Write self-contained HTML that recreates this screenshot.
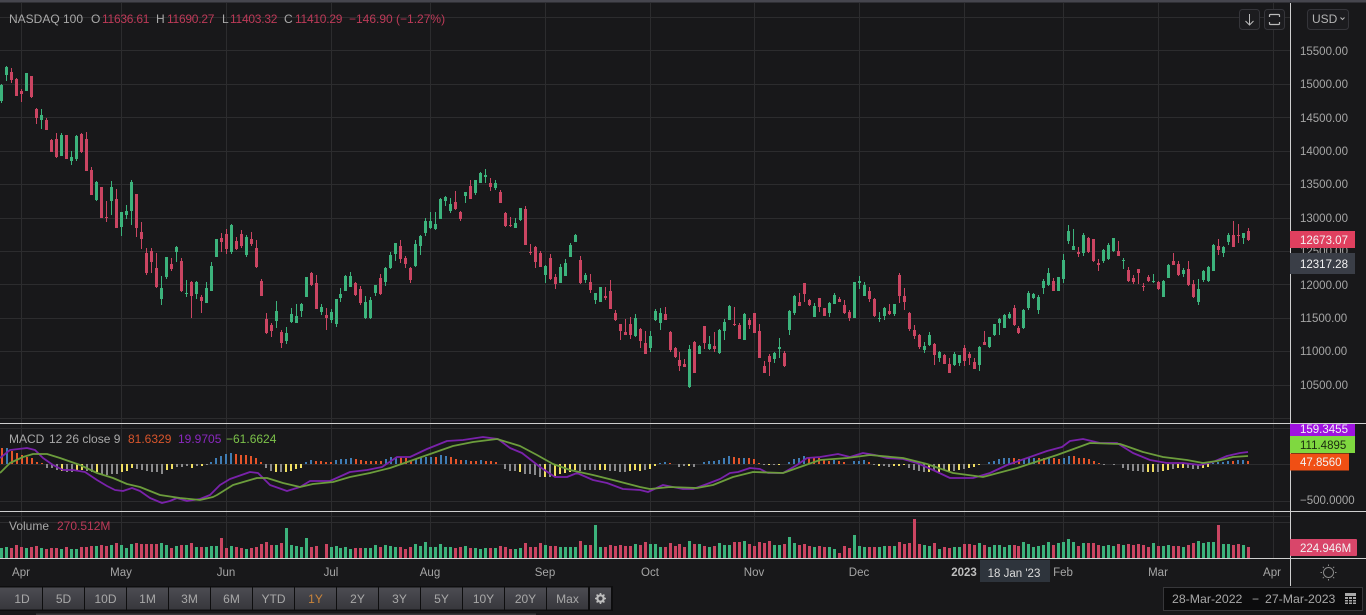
<!DOCTYPE html>
<html lang="en">
<head>
<meta charset="utf-8">
<title>NASDAQ 100</title>
<style>
html,body{margin:0;padding:0;background:#18181a;width:1366px;height:615px;overflow:hidden}
svg{display:block;position:absolute;left:0;top:0}
text{font-family:"Liberation Sans",sans-serif;font-size:12px;fill:#a9a9a9}
.r{fill:#bd3a58}
.v{fill:#bd3a58;letter-spacing:-.25px}
.ax{font-size:11.5px;fill:#a6a6a6}
.tg{font-size:12px;fill:#f2f2f2}
.bt{font-size:12px;fill:#a8a8a8;text-anchor:middle}
.m{text-anchor:middle}
</style>
</head>
<body>
<svg width="1366" height="615" viewBox="0 0 1366 615" xmlns="http://www.w3.org/2000/svg">
<defs>
<linearGradient id="b" x1="0" y1="0" x2="0" y2="1"><stop offset="0" stop-color="#4c4c52"/><stop offset="1" stop-color="#37373c"/></linearGradient>
</defs>
<rect width="1366" height="615" fill="#18181a"/>
<rect width="1366" height="2.5" fill="#46464e"/>

<!-- grid -->
<path fill="none" stroke="#2c2c2e" d="M0 17.5H1290M0 50.5H1290M0 84.5H1290M0 117.5H1290M0 151.5H1290M0 184.5H1290M0 218.5H1290M0 251.5H1290M0 284.5H1290M0 318.5H1290M0 351.5H1290M0 385.5H1290M0 418.5H1290M0 428.5H1290M0 464.5H1290M0 501.5H1290M0 516.5H1290M0 522.5H1290M21.5 3V558M121.5 3V558M226.5 3V558M331.5 3V558M430.5 3V558M545.5 3V558M650.5 3V558M754.5 3V558M859.5 3V558M964.5 3V558M1063.5 3V558M1158.5 3V558M1273.5 3V558"/>

<!-- volume -->
<path fill="none" stroke="#3cb37c" stroke-width="3" d="M1.5 548V558M6.5 547V558M26.5 548V558M41.5 548V558M61.5 549V558M71.5 549V558M76.5 549V558M96.5 546V558M111.5 545V558M121.5 545V558M126.5 548V558M131.5 544V558M161.5 543V558M166.5 545V558M176.5 546V558M186.5 545V558M196.5 547V558M206.5 547V558M211.5 546V558M216.5 546V558M231.5 546V558M246.5 549V558M276.5 545V558M286.5 528V558M291.5 545V558M296.5 546V558M301.5 547V558M306.5 538V558M331.5 547V558M336.5 546V558M340.5 548V558M345.5 547V558M350.5 549V558M365.5 548V558M370.5 548V558M375.5 545V558M385.5 545V558M390.5 546V558M395.5 547V558M415.5 544V558M420.5 546V558M425.5 542V558M430.5 547V558M435.5 547V558M440.5 544V558M445.5 547V558M450.5 547V558M465.5 546V558M475.5 548V558M480.5 549V558M485.5 548V558M495.5 548V558M515.5 549V558M520.5 548V558M545.5 545V558M560.5 547V558M565.5 547V558M570.5 547V558M575.5 547V558M585.5 545V558M595.5 525V558M600.5 547V558M635.5 544V558M650.5 544V558M655.5 544V558M660.5 547V558M689.5 541V558M699.5 544V558M709.5 547V558M719.5 543V558M724.5 545V558M729.5 545V558M744.5 541V558M774.5 545V558M779.5 545V558M789.5 537V558M794.5 543V558M814.5 547V558M829.5 547V558M834.5 549V558M854.5 535V558M859.5 546V558M864.5 547V558M879.5 547V558M884.5 546V558M894.5 546V558M924.5 545V558M929.5 546V558M939.5 549V558M954.5 547V558M959.5 547V558M979.5 543V558M989.5 547V558M994.5 545V558M999.5 545V558M1004.5 547V558M1009.5 545V558M1023.5 542V558M1028.5 544V558M1033.5 547V558M1038.5 546V558M1043.5 545V558M1048.5 542V558M1058.5 543V558M1063.5 542V558M1068.5 539V558M1073.5 542V558M1083.5 543V558M1103.5 546V558M1108.5 545V558M1113.5 546V558M1123.5 545V558M1153.5 543V558M1163.5 546V558M1168.5 545V558M1183.5 547V558M1198.5 541V558M1203.5 543V558M1208.5 542V558M1213.5 542V558M1223.5 544V558M1228.5 544V558M1243.5 545V558"/>
<path fill="none" stroke="#cb4562" stroke-width="3" d="M11.5 548V558M16.5 545V558M21.5 547V558M31.5 547V558M36.5 546V558M46.5 549V558M51.5 548V558M56.5 548V558M66.5 547V558M81.5 547V558M86.5 547V558M91.5 546V558M101.5 545V558M106.5 546V558M116.5 543V558M136.5 543V558M141.5 544V558M146.5 544V558M151.5 544V558M156.5 544V558M171.5 548V558M181.5 545V558M191.5 543V558M201.5 547V558M221.5 538V558M226.5 548V558M236.5 547V558M241.5 548V558M251.5 548V558M256.5 547V558M261.5 544V558M266.5 542V558M271.5 545V558M281.5 543V558M311.5 547V558M316.5 546V558M326.5 544V558M355.5 548V558M360.5 548V558M380.5 547V558M400.5 547V558M405.5 549V558M410.5 547V558M455.5 548V558M460.5 547V558M470.5 548V558M490.5 548V558M500.5 546V558M505.5 547V558M510.5 549V558M525.5 543V558M530.5 547V558M535.5 547V558M540.5 543V558M550.5 546V558M555.5 546V558M580.5 541V558M590.5 545V558M605.5 547V558M610.5 545V558M615.5 546V558M620.5 545V558M625.5 546V558M630.5 546V558M640.5 545V558M645.5 542V558M665.5 547V558M670.5 543V558M675.5 546V558M679.5 544V558M684.5 547V558M694.5 544V558M704.5 546V558M714.5 546V558M734.5 542V558M739.5 542V558M749.5 544V558M754.5 546V558M759.5 542V558M764.5 543V558M769.5 541V558M784.5 544V558M799.5 545V558M804.5 544V558M809.5 546V558M819.5 546V558M824.5 547V558M839.5 553V558M844.5 546V558M849.5 548V558M869.5 547V558M874.5 547V558M889.5 546V558M899.5 542V558M904.5 544V558M909.5 543V558M914.5 519V558M919.5 544V558M934.5 543V558M944.5 547V558M949.5 548V558M964.5 544V558M969.5 544V558M974.5 545V558M984.5 545V558M1014.5 545V558M1018.5 546V558M1053.5 545V558M1078.5 546V558M1088.5 543V558M1093.5 543V558M1098.5 545V558M1118.5 544V558M1128.5 544V558M1133.5 545V558M1138.5 544V558M1143.5 545V558M1148.5 547V558M1158.5 546V558M1173.5 546V558M1178.5 546V558M1188.5 545V558M1193.5 543V558M1218.5 525V558M1233.5 545V558M1238.5 544V558M1248.5 547V558"/>

<!-- macd histogram -->
<path fill="none" stroke="#3f7db5" stroke-width="2" d="M7 448V464M211 462V464M216 458V464M221 456V464M226 454V464M231 453V464M306 462V464M311 460V464M336 460V464M341 459V464M346 459V464M351 458V464M386 459V464M391 457V464M396 457V464M416 459V464M421 458V464M426 457V464M431 457V464M441 455V464M446 456V464M466 460V464M481 460V464M660 463V464M665 462V464M704 462V464M709 461V464M714 461V464M719 460V464M724 458V464M729 456V464M744 458V464M789 462V464M794 459V464M799 458V464M804 456V464M834 460V464M854 461V464M859 461V464M864 460V464M989 462V464M994 461V464M999 459V464M1004 458V464M1009 458V464M1024 459V464M1029 458V464M1034 458V464M1049 458V464M1064 458V464M1069 456V464M1213 463V464M1218 462V464M1223 462V464M1228 461V464M1238 460V464M1243 460V464"/>
<path fill="none" stroke="#e5552a" stroke-width="2" d="M2 448V464M12 451V464M17 453V464M22 455V464M27 457V464M32 458V464M37 462V464M42 463V464M236 454V464M241 455V464M246 455V464M251 456V464M256 458V464M261 462V464M316 461V464M321 461V464M326 462V464M331 462V464M356 459V464M361 460V464M366 461V464M371 461V464M376 461V464M381 461V464M401 457V464M406 458V464M411 460V464M436 457V464M451 457V464M456 459V464M461 460V464M471 461V464M476 461V464M486 461V464M491 461V464M496 462V464M670 463V464M734 457V464M739 458V464M749 458V464M754 459V464M759 463V464M809 457V464M814 458V464M819 458V464M824 459V464M829 461V464M839 461V464M844 462V464M869 462V464M1014 458V464M1019 459V464M1039 458V464M1044 458V464M1054 458V464M1059 459V464M1074 456V464M1079 458V464M1084 458V464M1089 459V464M1094 461V464M1099 463V464M1233 461V464M1248 461V464"/>
<path fill="none" stroke="#8a8a8c" stroke-width="2" d="M47 464V468M52 464V468M57 464V470M67 464V472M72 464V472M87 464V471M92 464V472M102 464V474M107 464V475M112 464V474M117 464V474M137 464V469M142 464V470M147 464V471M152 464V472M157 464V472M162 464V474M177 464V467M182 464V467M187 464V466M197 464V466M207 464V465M266 464V468M271 464V471M281 464V472M505 464V469M510 464V471M515 464V471M525 464V474M530 464V474M535 464V475M540 464V477M550 464V477M580 464V471M585 464V470M590 464V470M595 464V470M610 464V471M615 464V471M620 464V472M625 464V472M645 464V470M679 464V467M684 464V466M694 464V467M764 464V465M774 464V465M874 464V465M884 464V466M889 464V467M909 464V468M914 464V470M919 464V471M924 464V472M934 464V471M944 464V470M954 464V471M964 464V469M1104 464V465M1114 464V465M1123 464V468M1128 464V470M1133 464V471M1138 464V471M1143 464V472M1158 464V472M1173 464V469M1188 464V468M1193 464V469M1198 464V469"/>
<path fill="none" stroke="#f0de62" stroke-width="2" d="M62 464V471M77 464V470M82 464V470M97 464V472M122 464V472M127 464V471M132 464V468M167 464V470M172 464V469M192 464V468M202 464V466M276 464V472M286 464V472M291 464V471M296 464V469M301 464V468M520 464V472M545 464V477M555 464V476M560 464V474M565 464V473M570 464V472M575 464V470M600 464V470M605 464V470M630 464V471M635 464V470M640 464V471M650 464V469M655 464V466M689 464V466M769 464V465M779 464V465M879 464V466M894 464V466M899 464V466M904 464V465M929 464V472M939 464V472M949 464V471M959 464V470M969 464V468M974 464V467M979 464V465M1148 464V472M1153 464V472M1163 464V471M1168 464V470M1178 464V468M1183 464V468M1203 464V468M1208 464V467"/>

<!-- macd lines -->
<polyline fill="none" stroke="#7a22ab" stroke-width="1.8" stroke-linejoin="round" points="0,458 10,450 27,448 35,450 43,458 53,465 63,470 73,470 85,472 97,480 107,486 115,490 123,491 132,488 140,491 150,498 162,503 170,501 177,498 187,501 200,499 210,495 220,485 230,479 250,472 258,473 270,485 287,491 300,487 310,481 330,481 350,472 367,470 382,467 397,457 410,457 427,449 447,441 463,440 483,437 498,439 510,448 522,453 540,467 555,477 567,477 577,473 593,480 607,483 623,489 640,490 648,492 663,485 683,489 693,489 707,484 720,479 730,473 738,472 750,468 760,469 768,473 783,473 797,465 807,458 820,457 838,454 850,457 863,453 875,455 887,458 903,459 917,463 933,470 950,478 973,478 990,473 1007,465 1030,457 1047,451 1062,447 1070,441 1083,439 1100,443 1117,443 1133,453 1150,460 1167,463 1183,463 1200,465 1213,462 1227,456 1240,453 1248,452"/>
<polyline fill="none" stroke="#6c9d3c" stroke-width="1.8" stroke-linejoin="round" points="0,473 10,463 23,457 33,454 47,454 60,458 80,465 97,473 113,478 127,484 140,487 160,495 180,498 200,500 213,497 217,495 233,485 257,478 267,478 283,483 300,487 313,484 333,482 350,477 370,473 390,468 413,460 433,453 453,446 473,442 497,439 520,446 537,455 553,464 570,470 593,475 613,480 640,487 650,489 670,487 697,488 713,485 733,477 753,472 783,473 800,467 820,460 847,458 870,455 903,458 927,464 953,473 983,477 1017,468 1057,455 1090,443 1120,444 1123,445 1143,452 1163,457 1187,460 1203,463 1217,461 1233,457 1248,456"/>

<!-- candle wicks -->
<path fill="none" stroke="#3cb37c" d="M1.5 84V103M6.5 66V81M26.5 73V91M41.5 109V129M61.5 133V156M71.5 151V165M76.5 135V161M96.5 181V201M111.5 181V215M121.5 212V236M126.5 205V219M131.5 180V225M161.5 276V305M166.5 257V279M176.5 246V262M186.5 280V297M196.5 281V299M206.5 282V303M211.5 262V291M216.5 239V257M231.5 224V254M246.5 235V257M276.5 301V328M286.5 327V344M291.5 308V323M296.5 304V323M301.5 303V317M306.5 277V297M321.5 304V315M331.5 309V323M336.5 299V327M340.5 288V302M345.5 275V291M350.5 272V287M365.5 296V319M370.5 297V319M375.5 285V296M385.5 267V286M390.5 252V269M395.5 243V261M415.5 240V267M420.5 235V255M425.5 218V236M430.5 212V229M435.5 212V230M440.5 198V219M445.5 196V206M450.5 198V213M465.5 192V203M475.5 180V195M480.5 172V183M485.5 169V183M495.5 180V190M515.5 218V228M520.5 208V221M545.5 265V283M560.5 264V283M565.5 259V276M570.5 243V257M575.5 234V242M585.5 273V283M595.5 293V304M600.5 287V302M635.5 314V337M650.5 331V352M655.5 309V321M660.5 308V330M689.5 345V388M699.5 345V354M709.5 336V350M719.5 329V354M724.5 319V340M729.5 305V320M744.5 313V340M774.5 352V363M779.5 338V358M789.5 310V335M794.5 295V315M814.5 303V317M829.5 302V317M834.5 293V304M854.5 282V318M859.5 276V289M864.5 282V296M879.5 312V322M884.5 307V320M894.5 304V316M924.5 342V353M929.5 332V346M939.5 351V362M954.5 352V366M959.5 355V366M979.5 346V371M989.5 337V348M994.5 324V336M999.5 318V335M1004.5 314V328M1009.5 312V319M1023.5 309V329M1028.5 291V310M1033.5 293V299M1038.5 295V314M1043.5 279V294M1048.5 268V286M1058.5 277V291M1063.5 254V283M1068.5 225V244M1073.5 229V250M1083.5 233V256M1103.5 249V263M1108.5 243V260M1113.5 238V252M1123.5 258V269M1153.5 274V283M1163.5 280V297M1168.5 264V278M1183.5 268V277M1198.5 279V305M1203.5 270V282M1208.5 266V282M1213.5 244V271M1223.5 246V257M1228.5 233V245M1243.5 233V244"/>
<path fill="none" stroke="#cb4562" d="M11.5 68V83M16.5 78V96M21.5 89V102M31.5 76V98M36.5 108V124M46.5 118V130M51.5 139V152M56.5 133V158M66.5 135V159M81.5 133V153M86.5 132V171M91.5 167V195M101.5 187V218M106.5 201V222M116.5 189V228M136.5 194V237M141.5 222V249M146.5 248V275M151.5 248V273M156.5 253V288M171.5 258V271M181.5 258V292M191.5 281V318M201.5 295V313M221.5 233V252M226.5 229V254M236.5 237V250M241.5 230V248M251.5 232V246M256.5 240V268M261.5 279V296M266.5 313V334M271.5 323V337M281.5 330V348M311.5 272V286M316.5 275V309M326.5 308V330M355.5 282V296M360.5 286V305M380.5 274V295M400.5 240V263M405.5 256V268M410.5 267V283M455.5 191V210M460.5 211V221M470.5 180V199M490.5 178V191M500.5 190V203M505.5 212V227M510.5 217V227M525.5 206V245M530.5 244V255M535.5 246V268M540.5 251V267M550.5 254V280M555.5 274V289M580.5 256V284M590.5 274V293M605.5 287V300M610.5 280V309M615.5 310V321M620.5 324V340M625.5 319V335M630.5 317V339M640.5 328V348M645.5 331V354M665.5 307V320M670.5 331V352M675.5 347V358M679.5 352V371M684.5 359V367M694.5 341V373M704.5 326V349M714.5 332V352M734.5 307V326M739.5 323V339M749.5 318V329M754.5 313V333M759.5 324V358M764.5 361V373M769.5 354V376M784.5 351V367M799.5 293V306M804.5 283V302M809.5 299V306M819.5 298V312M824.5 308V316M839.5 297V302M844.5 300V314M849.5 310V321M869.5 287V302M874.5 298V317M889.5 304V315M899.5 273V303M904.5 288V310M909.5 312V331M914.5 325V339M919.5 334V349M934.5 343V365M944.5 354V364M949.5 358V373M964.5 345V366M969.5 352V365M974.5 358V369M984.5 331V345M1014.5 305V326M1018.5 326V334M1053.5 278V291M1078.5 247V257M1088.5 237V253M1093.5 239V262M1098.5 259V271M1118.5 241V256M1128.5 267V282M1133.5 275V284M1138.5 269V284M1143.5 283V291M1148.5 275V282M1158.5 281V290M1173.5 253V265M1178.5 261V276M1188.5 261V286M1193.5 280V298M1218.5 239V255M1233.5 221V247M1238.5 224V243M1248.5 228V241"/>
<!-- candle bodies -->
<path fill="none" stroke="#3cb37c" stroke-width="3" d="M1.5 85V101M6.5 67V75M26.5 73V91M41.5 115V120M61.5 135V156M71.5 157V161M76.5 136V159M96.5 182V200M111.5 187V201M121.5 212V227M126.5 211V215M131.5 182V211M161.5 288V299M166.5 257V277M176.5 247V252M186.5 293V294M196.5 282V294M206.5 288V303M211.5 266V291M216.5 239V257M231.5 225V252M246.5 237V255M276.5 311V321M286.5 333V341M291.5 314V322M296.5 316V323M301.5 304V311M306.5 277V297M321.5 307V312M331.5 312V320M336.5 299V324M340.5 294V298M345.5 276V291M350.5 276V287M365.5 302V318M370.5 300V318M375.5 285V293M385.5 268V282M390.5 255V268M395.5 243V254M415.5 244V266M420.5 236V246M425.5 221V233M430.5 221V228M435.5 224V229M440.5 199V219M445.5 197V201M450.5 204V211M465.5 192V196M475.5 180V193M480.5 173V183M485.5 175V177M495.5 183V188M515.5 223V228M520.5 208V220M545.5 266V275M560.5 267V283M565.5 263V276M570.5 245V257M575.5 235V242M585.5 275V280M595.5 293V300M600.5 287V302M635.5 318V336M650.5 336V348M655.5 311V320M660.5 313V323M689.5 349V387M699.5 346V354M709.5 344V349M719.5 330V353M724.5 322V331M729.5 306V320M744.5 314V340M774.5 353V359M779.5 347V349M789.5 311V330M794.5 296V313M814.5 306V317M829.5 303V313M834.5 295V304M854.5 282V318M859.5 281V283M864.5 285V296M879.5 318V319M884.5 308V316M894.5 304V314M924.5 346V350M929.5 335V345M939.5 352V358M954.5 354V365M959.5 355V363M979.5 347V365M989.5 337V347M994.5 324V335M999.5 319V323M1004.5 315V328M1009.5 314V318M1023.5 310V328M1028.5 293V308M1033.5 294V298M1038.5 297V310M1043.5 281V288M1048.5 273V285M1058.5 277V291M1063.5 260V279M1068.5 231V241M1073.5 246V250M1083.5 235V253M1103.5 250V261M1108.5 245V259M1113.5 238V251M1123.5 260V261M1153.5 281V282M1163.5 281V297M1168.5 265V278M1183.5 270V274M1198.5 289V302M1203.5 271V280M1208.5 267V281M1213.5 245V271M1223.5 247V253M1228.5 235V242M1243.5 233V238"/>
<path fill="none" stroke="#cb4562" stroke-width="3" d="M11.5 72V80M16.5 79V96M21.5 91V94M31.5 76V97M36.5 109V118M46.5 120V130M51.5 140V152M56.5 139V157M66.5 135V159M81.5 134V152M86.5 139V171M91.5 170V195M101.5 187V218M106.5 217V218M116.5 199V228M136.5 194V228M141.5 232V239M146.5 253V273M151.5 251V262M156.5 268V287M171.5 264V269M181.5 261V291M191.5 282V296M201.5 297V301M221.5 238V242M226.5 234V249M236.5 241V249M241.5 234V246M251.5 239V244M256.5 248V267M261.5 281V296M266.5 319V333M271.5 325V331M281.5 332V343M311.5 273V285M316.5 283V309M326.5 315V318M355.5 283V295M360.5 289V303M380.5 278V294M400.5 246V259M405.5 258V264M410.5 268V280M455.5 202V209M460.5 212V219M470.5 186V199M490.5 183V187M500.5 192V203M505.5 213V226M510.5 225V226M525.5 209V245M530.5 252V253M535.5 247V262M540.5 253V267M550.5 258V279M555.5 277V284M580.5 260V283M590.5 282V290M605.5 296V298M610.5 291V309M615.5 313V320M620.5 324V331M625.5 332V335M630.5 324V335M640.5 329V341M645.5 343V354M665.5 314V320M670.5 332V350M675.5 348V357M679.5 360V366M684.5 364V367M694.5 342V373M704.5 326V343M714.5 346V349M734.5 324V325M739.5 325V339M749.5 320V325M754.5 313V333M759.5 331V358M764.5 366V373M769.5 356V362M784.5 353V366M799.5 302V306M804.5 283V294M809.5 300V305M819.5 298V307M824.5 308V316M839.5 299V302M844.5 305V313M849.5 312V318M869.5 291V299M874.5 299V316M889.5 311V314M899.5 275V296M904.5 296V302M909.5 313V329M914.5 330V336M919.5 335V347M934.5 344V355M944.5 355V364M949.5 364V373M964.5 348V361M969.5 354V358M974.5 362V369M984.5 342V345M1014.5 308V325M1018.5 328V333M1053.5 281V291M1078.5 252V254M1088.5 238V252M1093.5 239V261M1098.5 263V265M1118.5 251V256M1128.5 270V281M1133.5 278V282M1138.5 269V273M1143.5 286V287M1148.5 277V281M1158.5 282V289M1173.5 261V265M1178.5 264V275M1188.5 269V285M1193.5 284V297M1218.5 246V250M1233.5 235V247M1238.5 235V236M1248.5 231V240"/>

<!-- header -->
<text x="9" y="23">NASDAQ 100</text>
<text x="91" y="23">O</text><text x="102" y="23" class="v">11636.61</text>
<text x="156" y="23">H</text><text x="167" y="23" class="v">11690.27</text>
<text x="222" y="23">L</text><text x="230" y="23" class="v">11403.32</text>
<text x="284" y="23">C</text><text x="295" y="23" class="v">11410.29</text>
<text x="349" y="23" class="r">−146.90 (−1.27%)</text>
<text x="9" y="443">MACD</text><text x="49" y="443">12 26 close 9</text>
<text x="128" y="443" style="fill:#d8552c">81.6329</text>
<text x="178" y="443" style="fill:#8a28bf">19.9705</text>
<text x="226" y="443" style="fill:#7cc24a">−61.6624</text>
<text x="9" y="530">Volume</text><text x="57" y="530" class="r">270.512M</text>

<!-- top buttons -->
<rect x="1239.5" y="9.5" width="20" height="20" rx="3" fill="#1c1c1f" stroke="#35353a"/>
<path fill="none" stroke="#bbb" d="M1249.5 14V25M1245.5 21L1249.5 25L1253.5 21"/>
<rect x="1264.5" y="9.5" width="20" height="20" rx="3" fill="#1c1c1f" stroke="#35353a"/>
<path fill="none" stroke="#bbb" stroke-width="1.2" d="M1269.5 17V15.5Q1269.5 14.5 1270.5 14.5H1278.5Q1279.5 14.5 1279.5 15.5V17M1269.5 22V23.5Q1269.5 24.5 1270.5 24.5H1278.5Q1279.5 24.5 1279.5 23.5V22"/>
<rect x="1307.5" y="9.5" width="41" height="20" rx="3" fill="#1c1c1f" stroke="#35353a"/>
<text x="1312" y="23" style="fill:#b4b4b4;font-size:12px">USD</text>
<path fill="none" stroke="#b4b4b4" d="M1340.5 17.5L1342.5 19.5L1344.5 17.5"/>

<!-- pane & axis lines -->
<path fill="none" stroke="#cfcfcf" d="M0 423.5H1366M0 511.5H1366M0 558.5H1366M1290.5 3V586"/>

<!-- price axis -->
<text class="ax" x="1300" y="55">15500.00</text>
<text class="ax" x="1300" y="88">15000.00</text>
<text class="ax" x="1300" y="122">14500.00</text>
<text class="ax" x="1300" y="155">14000.00</text>
<text class="ax" x="1300" y="188">13500.00</text>
<text class="ax" x="1300" y="222">13000.00</text>
<text class="ax" x="1300" y="255">12500.00</text>
<text class="ax" x="1300" y="289">12000.00</text>
<text class="ax" x="1300" y="322">11500.00</text>
<text class="ax" x="1300" y="355">11000.00</text>
<text class="ax" x="1300" y="389">10500.00</text>
<rect x="1290" y="231" width="65" height="17" fill="#e0405f"/>
<text class="tg" x="1300" y="244" style="font-size:11.5px">12673.07</text>
<rect x="1290" y="253" width="65" height="21" fill="#3a3e47"/>
<text class="tg" x="1300" y="268" style="font-size:11.5px">12317.28</text>

<!-- macd axis -->
<rect x="1290" y="424" width="65" height="12.5" fill="#9f12e0"/>
<svg x="1290" y="424" width="65" height="13" viewBox="0 0 65 13"><text class="tg" x="10" y="9" style="font-size:11.5px">159.3455</text></svg>
<rect x="1290" y="436" width="65" height="17" fill="#7fd840"/>
<text x="1300" y="449" style="fill:#1b2a10;font-size:11.5px">111.4895</text>
<rect x="1290" y="453.5" width="59" height="17" fill="#f04f14"/>
<text class="tg" x="1300" y="466" style="font-size:11.5px">47.8560</text>
<text class="ax" x="1300" y="504">−500.0000</text>

<!-- volume tag -->
<rect x="1290" y="539" width="67" height="17" rx="1" fill="#d9466a"/>
<text class="tg" x="1300" y="552" style="font-size:11.5px">224.946M</text>

<!-- time axis -->
<text class="ax m" x="21" y="576">Apr</text>
<text class="ax m" x="121" y="576">May</text>
<text class="ax m" x="226" y="576">Jun</text>
<text class="ax m" x="331" y="576">Jul</text>
<text class="ax m" x="430" y="576">Aug</text>
<text class="ax m" x="545" y="576">Sep</text>
<text class="ax m" x="650" y="576">Oct</text>
<text class="ax m" x="754" y="576">Nov</text>
<text class="ax m" x="859" y="576">Dec</text>
<text class="ax m" x="964" y="576" style="font-weight:bold;fill:#bdbdbd">2023</text>
<text class="ax m" x="1063" y="576">Feb</text>
<text class="ax m" x="1158" y="576">Mar</text>
<text class="ax m" x="1272" y="576">Apr</text>
<rect x="980" y="560" width="70" height="22" fill="#2e343c"/>
<text x="1014" y="577" class="m" style="fill:#dcdcdc;font-size:11.5px">18 Jan '23</text>

<!-- settings sun -->
<g fill="none" stroke="#8b8b8b">
<circle cx="1328.5" cy="572.5" r="5"/>
<path d="M1328.5 564.5V566M1328.5 579V580.5M1320.5 572.5H1322M1335 572.5H1336.5M1322.8 566.8L1323.9 567.9M1333.1 577.1L1334.2 578.2M1322.8 578.2L1323.9 577.1M1333.1 567.9L1334.2 566.8"/>
</g>

<!-- toolbar -->
<rect x="0" y="586" width="613" height="25" fill="#0e0e0f"/>
<rect x="0" y="587.5" width="42" height="22" fill="url(#b)"/>
<rect x="43" y="587.5" width="41" height="22" fill="url(#b)"/>
<rect x="85" y="587.5" width="41" height="22" fill="url(#b)"/>
<rect x="127" y="587.5" width="41" height="22" fill="url(#b)"/>
<rect x="169" y="587.5" width="41" height="22" fill="url(#b)"/>
<rect x="211" y="587.5" width="41" height="22" fill="url(#b)"/>
<rect x="253" y="587.5" width="41" height="22" fill="url(#b)"/>
<rect x="295" y="587.5" width="41" height="22" fill="url(#b)"/>
<rect x="337" y="587.5" width="41" height="22" fill="url(#b)"/>
<rect x="379" y="587.5" width="41" height="22" fill="url(#b)"/>
<rect x="421" y="587.5" width="41" height="22" fill="url(#b)"/>
<rect x="463" y="587.5" width="41" height="22" fill="url(#b)"/>
<rect x="505" y="587.5" width="41" height="22" fill="url(#b)"/>
<rect x="547" y="587.5" width="41" height="22" fill="url(#b)"/>
<rect x="590" y="587.5" width="21" height="22" fill="url(#b)"/>
<text class="bt" x="22" y="603">1D</text>
<text class="bt" x="63.5" y="603">5D</text>
<text class="bt" x="105.5" y="603">10D</text>
<text class="bt" x="147.5" y="603">1M</text>
<text class="bt" x="189.5" y="603">3M</text>
<text class="bt" x="231.5" y="603">6M</text>
<text class="bt" x="273.5" y="603">YTD</text>
<text class="bt" x="315.5" y="603" style="fill:#c9843a">1Y</text>
<text class="bt" x="357.5" y="603">2Y</text>
<text class="bt" x="399.5" y="603">3Y</text>
<text class="bt" x="441.5" y="603">5Y</text>
<text class="bt" x="483.5" y="603">10Y</text>
<text class="bt" x="525.5" y="603">20Y</text>
<text class="bt" x="567.5" y="603">Max</text>
<circle cx="600.5" cy="598.5" r="3.2" fill="none" stroke="#bdbdbd" stroke-width="2.2"/>
<path fill="none" stroke="#bdbdbd" stroke-width="1.6" d="M600.5 593V595M600.5 602V604M595 598.5H597M604 598.5H606M596.6 594.6L598 596M603 601L604.4 602.4M596.6 602.4L598 601M603 596L604.4 594.6"/>
<rect x="36" y="613.5" width="500" height="1.5" fill="#3a3a3c"/>

<!-- date range -->
<rect x="1163.5" y="587.5" width="199" height="23" fill="#0c0c0d" stroke="#37373a"/>
<text x="1172" y="603" style="font-size:12.3px;fill:#a8a8a8">28-Mar-2022</text>
<text x="1252" y="603" style="font-size:12px;fill:#a8a8a8">−</text>
<text x="1265" y="603" style="font-size:12.3px;fill:#a8a8a8">27-Mar-2023</text>
<rect x="1345" y="593" width="11" height="11" fill="#a8a8a8"/>
<path fill="none" stroke="#0c0c0d" d="M1345 596.5H1356M1345 599.5H1356M1345 602H1356M1348.5 596V604M1352.5 596V604"/>
</svg>
</body>
</html>
